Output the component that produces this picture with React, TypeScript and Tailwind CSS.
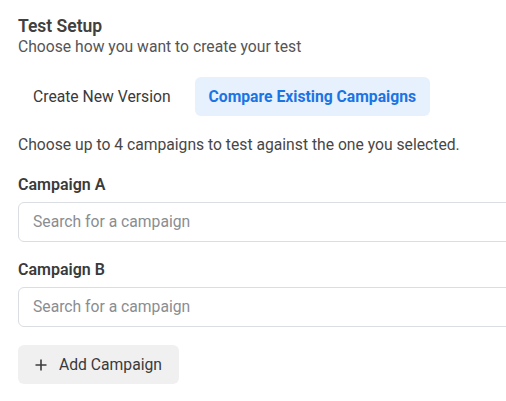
const PlusIcon = () => (
  <svg width="12" height="12" viewBox="0 0 12 12" className="shrink-0">
    <path d="M6 0.5v11M0.5 6h11" stroke="#3c3c3c" strokeWidth="1.6" fill="none" />
  </svg>
);

const CampaignField = ({ label, first }: { label: string; first?: boolean }) => (
  <div className={first ? 'mt-[20px]' : 'mt-[18px]'}>
    <div className="text-[16px] font-semibold text-[#3a3a3a] leading-[20px]">{label}</div>
    <div className="mt-[7px] h-[40px] w-[520px] rounded-[6px] border border-[#dadde1] bg-white flex items-center px-[14px]">
      <span className="text-[15.7px] text-[#8a8d91]">Search for a campaign</span>
    </div>
  </div>
);

export default function App() {
  return (
    <div className="w-[506px] h-[401px] overflow-hidden bg-white font-['Roboto',sans-serif] pl-[18px] pt-[15px]">
      <h2 className="text-[17.5px] font-semibold text-[#404040] leading-[22px]">Test Setup</h2>
      <p className="text-[15.7px] text-[#555] leading-[20px]">Choose how you want to create your test</p>

      <div className="mt-[20px] flex items-center gap-[9px]">
        <button className="h-[39px] px-[15px] rounded-[6px] text-[15.7px] text-[#3a3a3a]">Create New Version</button>
        <button className="h-[39px] px-[14px] rounded-[6px] bg-[#e7f0fd] text-[15.7px] font-bold text-[#1b74e4]">
          Compare Existing Campaigns
        </button>
      </div>

      <p className="mt-[19px] text-[15.7px] text-[#474747] leading-[20px]">
        Choose up to 4 campaigns to test against the one you selected.
      </p>

      <CampaignField label="Campaign A" first />
      <CampaignField label="Campaign B" />

      <button className="mt-[18px] h-[39px] w-[161px] rounded-[6px] bg-[#f0f0f0] flex items-center pl-[17px] gap-[12px] text-[15.7px] text-[#3a3a3a]">
        <PlusIcon />
        Add Campaign
      </button>
    </div>
  );
}
